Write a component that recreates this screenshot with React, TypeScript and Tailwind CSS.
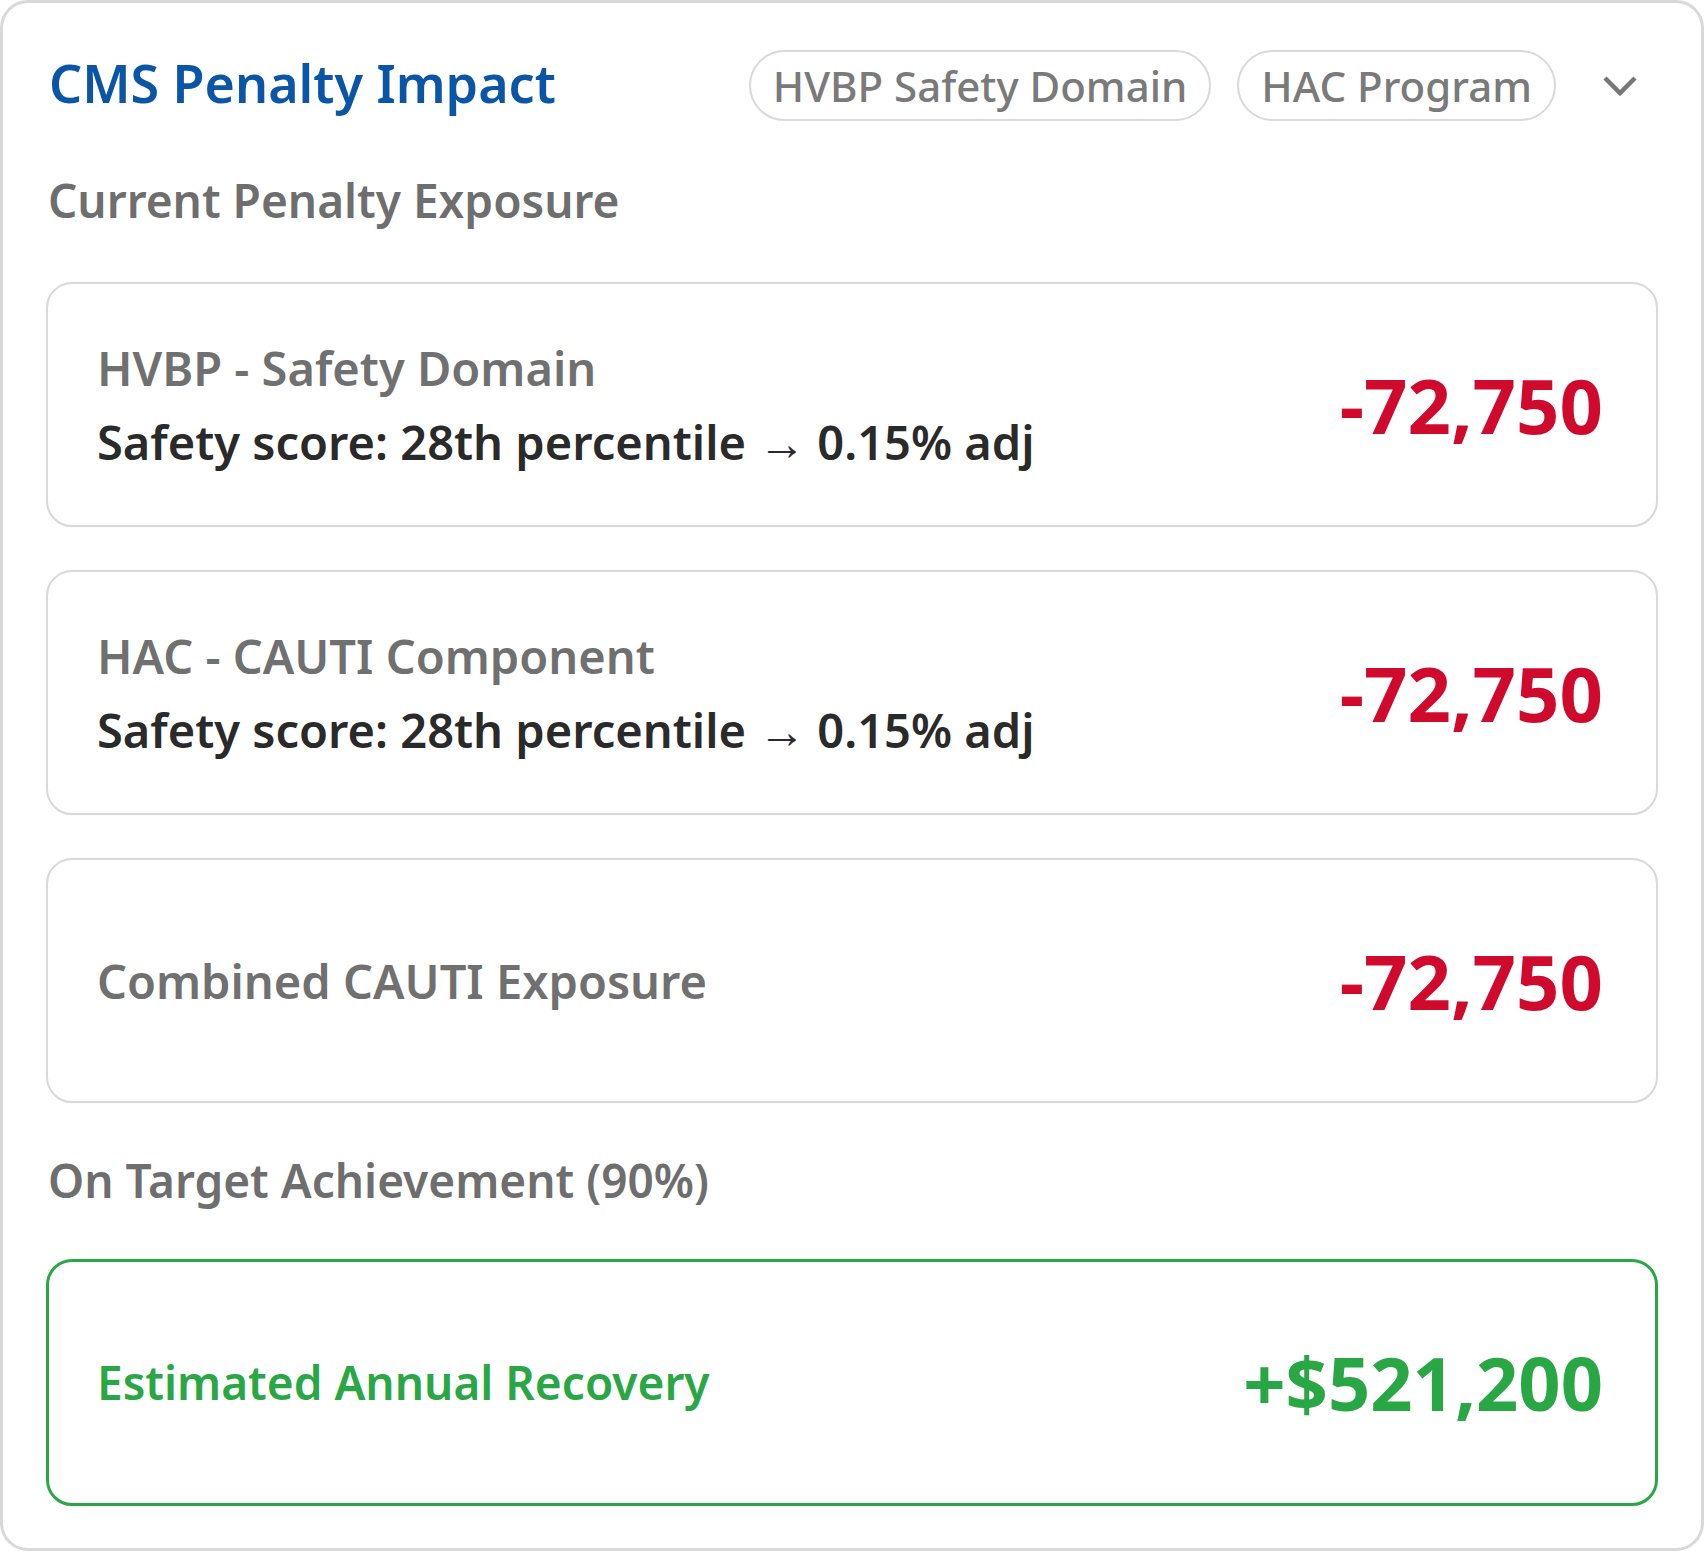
import React from 'react';

type Row = {
  title: string;
  detail?: string;
  amount: string;
};

const rows: Row[] = [
  { title: 'HVBP - Safety Domain', detail: 'Safety score: 28th percentile → 0.15% adj', amount: '-72,750' },
  { title: 'HAC - CAUTI Component', detail: 'Safety score: 28th percentile → 0.15% adj', amount: '-72,750' },
  { title: 'Combined CAUTI Exposure', amount: '-72,750' },
];

function Chevron() {
  return (
    <svg width="36" height="22" viewBox="0 0 36 22" fill="none" className="text-[#777777]">
      <path d="M3 3l15 15L33 3" stroke="currentColor" strokeWidth="4.5" />
    </svg>
  );
}

function Pill({ label }: { label: string }) {
  return (
    <span className="flex h-[71px] items-center rounded-full border-2 border-[#d9d9d9] px-[22px] text-[42px] font-medium text-[#7a7a7a]">
      {label}
    </span>
  );
}

function PenaltyRow({ row }: { row: Row }) {
  return (
    <div className="flex h-[245px] items-center justify-between rounded-[26px] border-2 border-[#d9d9d9] pl-[49px] pr-[53px]">
      <div className="flex flex-col gap-[16px]">
        <span className="text-[47px] font-semibold leading-[58px] text-[#707070]">{row.title}</span>
        {row.detail && (
          <span className="text-[47px] font-semibold leading-[58px] text-[#2a2a2a]">{row.detail}</span>
        )}
      </div>
      <span className="text-[76px] font-bold leading-none text-[#d00a2c]">{row.amount}</span>
    </div>
  );
}

export default function App() {
  return (
    <div className="bg-white" style={{ fontFamily: '"Noto Sans", "Open Sans", sans-serif' }}>
      <div className="flex h-[1551px] w-[1704px] flex-col rounded-[28px] border-[3px] border-[#d9d9d9] px-[43px] pt-[47px]">
        <div className="flex items-center justify-between">
          <h1 className="ml-[3px] pb-[6px] text-[52px] font-semibold leading-none text-[#0a55a6]">CMS Penalty Impact</h1>
          <div className="flex items-center gap-[26px]">
            <Pill label="HVBP Safety Domain" />
            <Pill label="HAC Program" />
            <div className="ml-[20px] mr-[20px]">
              <Chevron />
            </div>
          </div>
        </div>

        <h2 className="ml-[2px] mt-[50px] text-[46px] font-semibold leading-[58px] text-[#6e6e6e]">Current Penalty Exposure</h2>

        <div className="mt-[53px] flex flex-col gap-[43px]">
          {rows.map((row) => (
            <PenaltyRow key={row.title} row={row} />
          ))}
        </div>

        <h2 className="ml-[2px] mt-[48px] text-[46px] font-semibold leading-[58px] text-[#6e6e6e]">On Target Achievement (90%)</h2>

        <div className="mt-[50px] flex h-[247px] items-center justify-between rounded-[26px] border-[3px] border-[#2aa745] pl-[48px] pr-[52px]">
          <span className="text-[46px] font-semibold text-[#2aa745]">Estimated Annual Recovery</span>
          <span className="text-[74px] font-bold leading-none text-[#2aa745]">+$521,200</span>
        </div>
      </div>
    </div>
  );
}
